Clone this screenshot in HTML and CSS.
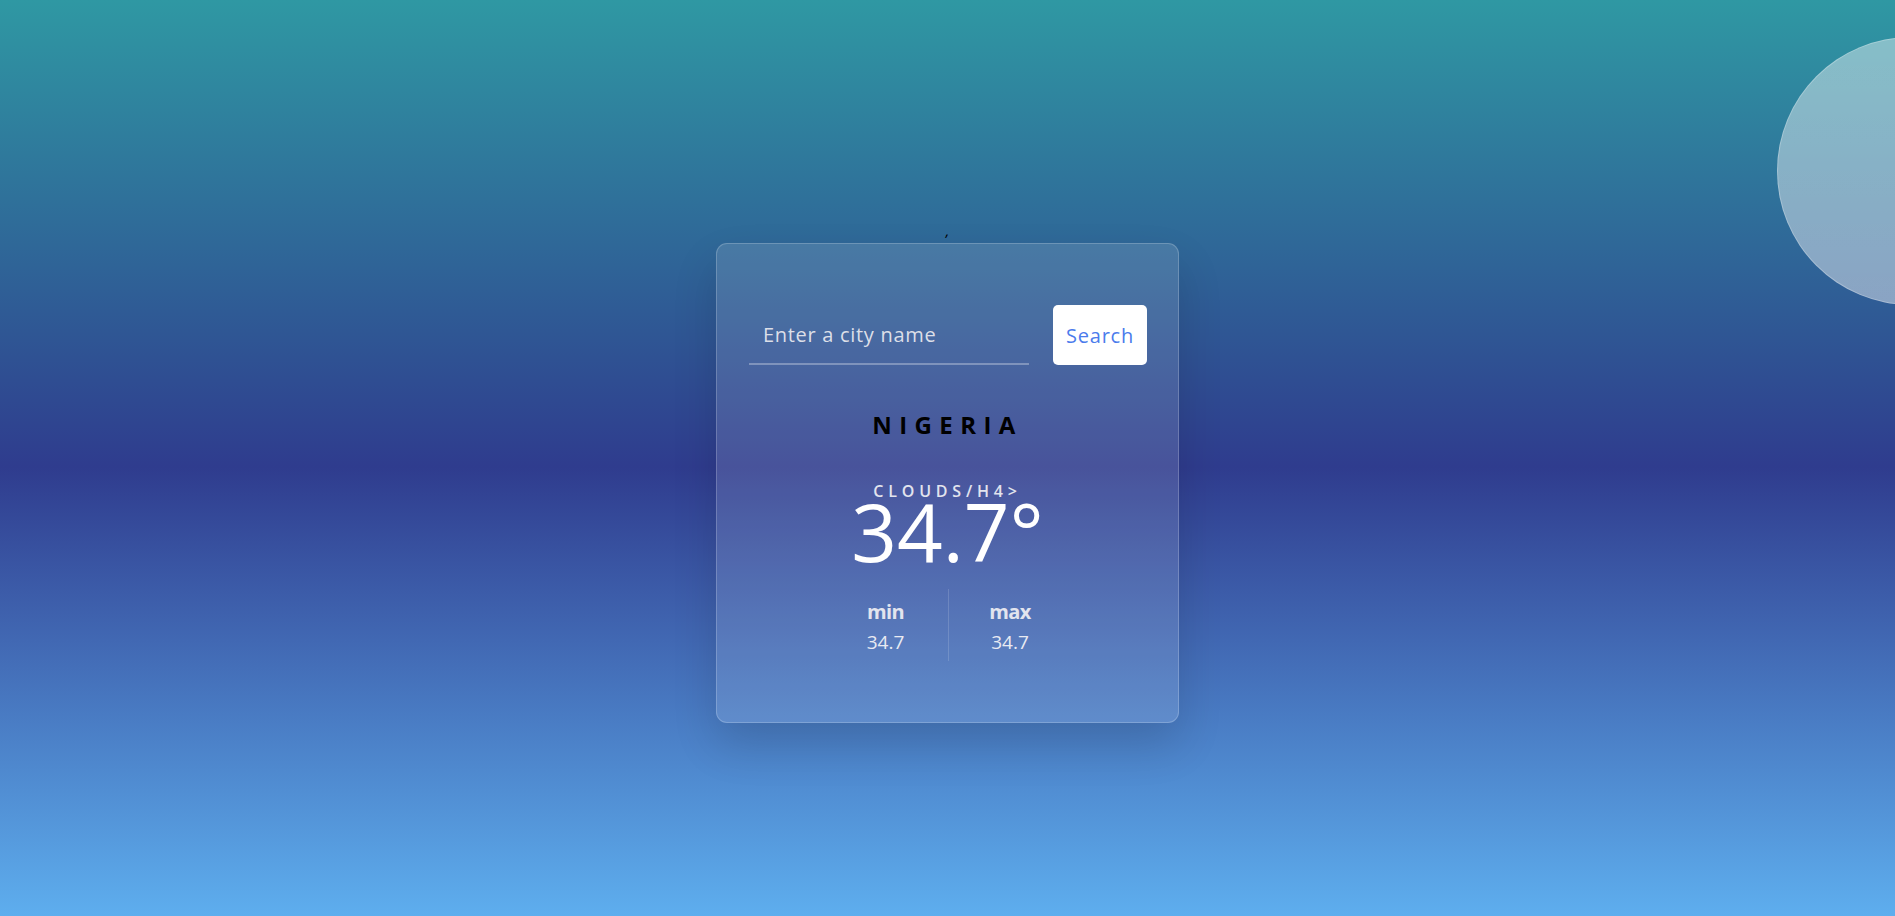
FILE: index.html
```html
<!DOCTYPE html>
<html lang="en">
<head>
<meta charset="UTF-8">
<title>Weather</title>
<link rel="stylesheet" href="styles.css">
</head>
<body>
<div class="orb"></div>
<main class="page">
  <div class="stray">,</div>
  <section class="card">
    <form class="search">
      <input class="search-input" type="text" placeholder="Enter a city name">
      <button class="search-btn" type="button">Search</button>
    </form>
    <h2 class="city">NIGERIA</h2>
    <h4 class="condition">CLOUDS/H4&gt;</h4>
    <h1 class="temp">34.7°</h1>
    <div class="range">
      <div class="range-col">
        <span class="range-label">min</span>
        <span class="range-value">34.7</span>
      </div>
      <div class="range-col">
        <span class="range-label">max</span>
        <span class="range-value">34.7</span>
      </div>
    </div>
  </section>
</main>
</body>
</html>
```

FILE: styles.css
```css
* { box-sizing: border-box; }

html, body {
  margin: 0;
  padding: 0;
  height: 100%;
}

body {
  overflow: hidden;
  font-family: "Open Sans", "Liberation Sans", sans-serif;
  background: linear-gradient(180deg, #2f98a3 0%, #2f3c8e 51%, #5eaeee 100%);
  position: relative;
}

.orb {
  position: absolute;
  top: 37px;
  left: 1777px;
  width: 268px;
  height: 268px;
  border-radius: 50%;
  background: linear-gradient(180deg, rgba(255,255,255,0.42), rgba(255,255,255,0.44));
  border: 1px solid rgba(255,255,255,0.25);
}

.page {
  height: 100%;
  display: flex;
  flex-direction: column;
  align-items: center;
  justify-content: center;
}

.stray {
  height: 50px;
  padding-top: 28px;
  font-size: 14px;
  line-height: 20px;
  color: #000;
  font-style: italic;
}

.card {
  width: 463px;
  height: 480px;
  padding: 61px 32px 0;
  border-radius: 11px;
  background: rgba(255,255,255,0.12);
  border: 1px solid rgba(255,255,255,0.2);
  box-shadow: 0 22px 45px rgba(0,0,0,0.14);
  display: flex;
  flex-direction: column;
  align-items: center;
}

.search {
  width: 100%;
  display: flex;
  gap: 24px;
  align-items: stretch;
}

.search-input {
  flex: 0 0 280px;
  height: 60px;
  padding: 0 0 0 14px;
  border: none;
  border-bottom: 2px solid rgba(255,255,255,0.3);
  background: transparent;
  font-family: inherit;
  font-size: 20px;
  letter-spacing: 0.7px;
  color: #fff;
  outline: none;
}

.search-input::placeholder {
  color: #dcdfe8;
}

.search-btn {
  flex: 0 0 94px;
  height: 60px;
  border: none;
  border-radius: 5px;
  background: #fff;
  color: #4b7bec;
  font-family: inherit;
  font-size: 20px;
  letter-spacing: 0.8px;
  padding: 0;
}

.city {
  margin: 44px 0 0;
  font-size: 24px;
  line-height: 32px;
  font-weight: 700;
  letter-spacing: 7.4px;
  color: #000;
}

.condition {
  margin: 40px 0 0;
  font-size: 16px;
  line-height: 20px;
  font-weight: 600;
  letter-spacing: 4.8px;
  color: #e2e4ee;
}

.temp {
  margin: 0;
  font-size: 80px;
  line-height: 60px;
  font-weight: 400;
  color: #fff;
}

.range {
  margin-top: 28px;
  display: flex;
}

.range-col {
  width: 124px;
  height: 72px;
  display: flex;
  flex-direction: column;
  align-items: center;
  padding-top: 12px;
}

.range-col + .range-col {
  border-left: 1px solid rgba(255,255,255,0.15);
}

.range-label {
  font-size: 20px;
  line-height: 22px;
  font-weight: 700;
  letter-spacing: -0.6px;
  color: #e2e4ee;
}

.range-value {
  margin-top: 8px;
  font-size: 19px;
  line-height: 22px;
  color: #e8eaf2;
}
```
